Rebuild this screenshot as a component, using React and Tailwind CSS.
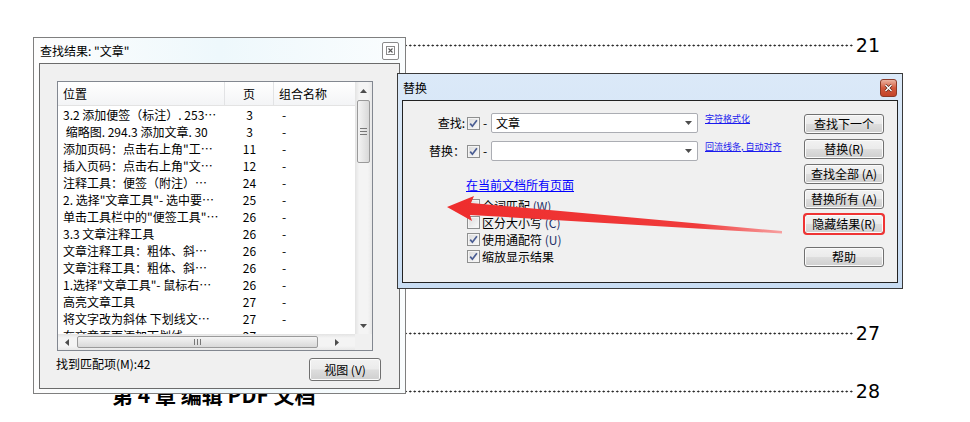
import React from "react";

const rows = [
  ["3.2 添加便签（标注）. 253…", "3"],
  ["\u00a0缩略图. 294.3 添加文章. 30", "3"],
  ["添加页码：点击右上角\"工…", "11"],
  ["插入页码：点击右上角\"文…", "12"],
  ["注释工具：便签（附注）…", "24"],
  ["2. 选择\"文章工具\"- 选中要…", "25"],
  ["单击工具栏中的\"便签工具\"…", "26"],
  ["3.3 文章注释工具", "26"],
  ["文章注释工具：粗体、斜…", "26"],
  ["文章注释工具：粗体、斜…", "26"],
  ["1.选择\"文章工具\"- 鼠标右…", "26"],
  ["高亮文章工具", "27"],
  ["将文字改为斜体 下划线文…", "27"],
  ["在文章页面添加下划线…", "27"],
];

function Check({ checked }) {
  return (
    <span className="flex h-[13px] w-[13px] shrink-0 items-center justify-center border border-[#8e8f8f] bg-gradient-to-br from-[#dadada] to-[#fbfbfb] shadow-[inset_0_0_0_1px_#f4f4f4]">
      {checked && (
        <svg width="9" height="9" viewBox="0 0 9 9">
          <path d="M1.2 4.6 L3.4 7.2 L7.9 1.2" stroke="#4a5d93" strokeWidth="1.7" fill="none" />
        </svg>
      )}
    </span>
  );
}

function Btn({ children, className = "" }) {
  return (
    <div
      className={
        "flex items-center justify-center rounded-[3px] border border-[#707070] bg-[linear-gradient(#f2f2f2_0%,#ebebeb_48%,#dddddd_52%,#cfcfcf_100%)] text-[12px] leading-[14px] text-black shadow-[inset_0_0_0_1px_#fbfbfb] " +
        className
      }
    >
      {children}
    </div>
  );
}

function TocLine({ top, num }) {
  return (
    <div className="absolute left-[120px] flex h-[20px] w-[760px] items-center" style={{ top }}>
      <div className="h-[3px] flex-1 bg-[radial-gradient(circle,#222_0.85px,transparent_1.15px)] bg-[length:4.5px_3px] bg-repeat-x" />
      <span className="ml-[3px] font-['DejaVu_Sans',sans-serif] text-[19px] leading-[20px] text-black">{num}</span>
    </div>
  );
}

function Tri({ dir }) {
  const d = {
    up: "M0 4 L3.5 0 L7 4 Z",
    down: "M0 0 L7 0 L3.5 4 Z",
    left: "M4 0 L4 7 L0 3.5 Z",
    right: "M0 0 L4 3.5 L0 7 Z",
  }[dir];
  const w = dir === "up" || dir === "down" ? 7 : 4;
  const h = dir === "up" || dir === "down" ? 4 : 7;
  return (
    <svg width={w} height={h} viewBox={`0 0 ${w} ${h}`}>
      <path d={d} fill="#4d4d4d" />
    </svg>
  );
}

function ResultsWindow() {
  return (
    <div className="absolute left-[33px] top-[37px] flex h-[357px] w-[373px] flex-col border border-[#7f7f7f] bg-gradient-to-r from-[#fdfdfd] via-[#eef8fc] to-[#fafdfe] px-[5px] pb-[4px]">
      <div className="flex h-[25px] items-center justify-between">
        <span className="pl-[1px] text-[12px] leading-[16px] text-black">查找结果: "文章"</span>
        <div className="mr-[1px] flex h-[18px] w-[17px] items-center justify-center rounded-[2px] border border-[#8a8a8a] bg-white">
          <svg width="9" height="9" viewBox="0 0 9 9">
            <rect x="0.5" y="0.5" width="8" height="8" fill="none" stroke="#8a8a8a" />
            <path d="M2.5 2.5 L6.5 6.5 M6.5 2.5 L2.5 6.5" stroke="#555" strokeWidth="1.1" />
          </svg>
        </div>
      </div>
      <div className="flex flex-1 flex-col border border-[#6b6b6b] bg-[#f0f0f0] px-[17px] pt-[17px]">
        <div className="flex h-[270px] w-[316px] flex-col border border-[#828790] bg-white">
          <div className="flex h-[252px]">
            <div className="w-[297px] overflow-hidden">
              <div className="flex h-[24px] items-stretch border-b border-[#e3e3e3] bg-gradient-to-b from-white to-[#f3f4f6] text-[12px] text-black">
                <div className="flex w-[167px] items-center border-r border-[#e2e3e5] pl-[5px]">位置</div>
                <div className="flex w-[49px] items-center justify-center border-r border-[#e2e3e5]">页</div>
                <div className="flex flex-1 items-center pl-[5px]">组合名称</div>
              </div>
              {rows.map(([t, p], i) => (
                <div key={i} className="flex h-[17px] items-center whitespace-nowrap text-[12px] leading-[17px] text-black">
                  <div className="w-[167px] overflow-hidden pl-[5px]">{t}</div>
                  <div className="w-[49px] text-center">{p}</div>
                  <div className="pl-[8px]">-</div>
                </div>
              ))}
            </div>
            <div className="flex w-[17px] flex-col items-center bg-[linear-gradient(to_right,#e3e3e3,#f4f4f4_25%,#f4f4f4_75%,#e8e8e8)]">
              <div className="flex h-[17px] items-center justify-center">
                <Tri dir="up" />
              </div>
              <div className="mt-px flex h-[63px] w-[13px] flex-col items-center justify-center gap-[2px] rounded-[2px] border border-[#9a9a9a] bg-gradient-to-r from-[#f4f4f4] to-[#d9d9d9]">
                <span className="h-px w-[7px] bg-[#777]" />
                <span className="h-px w-[7px] bg-[#777]" />
                <span className="h-px w-[7px] bg-[#777]" />
              </div>
              <div className="flex-1" />
              <div className="flex h-[17px] items-center justify-center">
                <Tri dir="down" />
              </div>
            </div>
          </div>
          <div className="flex h-[16px]">
            <div className="flex w-[297px] items-center bg-[linear-gradient(#e3e3e3,#f4f4f4_25%,#f4f4f4_75%,#e8e8e8)]">
              <div className="flex w-[17px] items-center justify-center">
                <Tri dir="left" />
              </div>
              <div className="ml-[2px] flex h-[12px] w-[241px] items-center justify-center gap-[2px] rounded-[2px] border border-[#9a9a9a] bg-gradient-to-b from-[#f4f4f4] to-[#d9d9d9]">
                <span className="h-[6px] w-px bg-[#777]" />
                <span className="h-[6px] w-px bg-[#777]" />
                <span className="h-[6px] w-px bg-[#777]" />
              </div>
              <div className="flex flex-1 items-center justify-center">
                <Tri dir="right" />
              </div>
            </div>
            <div className="flex-1 bg-[#f0f0f0]" />
          </div>
        </div>
        <div className="mt-[5px] flex items-start justify-between">
          <span className="ml-[-1px] text-[12px] leading-[16px] text-black">找到匹配项(M):42</span>
          <Btn className="mr-px mt-[2px] h-[23px] w-[72px]">视图 (V)</Btn>
        </div>
      </div>
    </div>
  );
}

function Combo({ value }) {
  return (
    <div className="ml-[3px] flex h-[20px] w-[207px] items-center justify-between rounded-[2px] border border-[#abadb3] bg-white pl-[4px] pr-[5px] text-[12px] text-black">
      <span>{value}</span>
      <Tri dir="down" />
    </div>
  );
}

function ReplaceWindow() {
  return (
    <div className="absolute left-[397px] top-[73px] flex h-[216px] w-[506px] flex-col border border-[#3a3a3a] bg-gradient-to-b from-[#dbe9f8] to-[#c9ddf3] px-[4px] pb-[5px]">
      <div className="flex h-[26px] items-start justify-between">
        <span className="pl-[1px] pt-[6px] text-[12px] leading-[16px] text-black">替换</span>
        <div className="mr-px mt-[5px] flex h-[18px] w-[17px] items-center justify-center rounded-[3px] border border-[#8b3a28] bg-gradient-to-b from-[#eab3a2] via-[#d2583c] to-[#c4452a]">
          <svg width="9" height="8" viewBox="0 0 9 8">
            <path d="M1.5 1 L7.5 7 M7.5 1 L1.5 7" stroke="#4a1a10" strokeWidth="2.6" />
            <path d="M1.5 1 L7.5 7 M7.5 1 L1.5 7" stroke="#fff" strokeWidth="1.5" />
          </svg>
        </div>
      </div>
      <div className="flex flex-1 border border-[#222] bg-[#f0f0f0]">
        <div className="flex-1 pt-[12px] text-[12px] text-black">
          <div className="flex h-[20px] items-center">
            <span className="w-[62px] text-right leading-[16px]">查找:</span>
            <span className="ml-[2px]"><Check checked /></span>
            <span className="ml-[3px] w-[5px]">-</span>
            <Combo value="文章" />
            <span className="ml-[7px] self-start pt-[1px] text-[9px] leading-[10px] text-[#1a1aee] underline">字符格式化</span>
          </div>
          <div className="mt-[8px] flex h-[20px] items-center">
            <span className="w-[62px] text-right leading-[16px]">替换：</span>
            <span className="ml-[2px]"><Check checked /></span>
            <span className="ml-[3px] w-[5px]">-</span>
            <Combo value="" />
            <span className="ml-[7px] self-start pt-[1px] text-[9px] leading-[10px] text-[#1a1aee] underline">回流线条, 自动对齐</span>
          </div>
          <div className="mt-[16px] pl-[63px] leading-[16px] text-[#0000ff] underline">在当前文档所有页面</div>
          <div className="mt-[4px] flex flex-col pl-[64px]">
            {[
              ["全词匹配 ", "(W)", false],
              ["区分大小写 ", "(C)", false],
              ["使用通配符 ", "(U)", true],
              ["缩放显示结果", "", true],
            ].map(([a, b, c], i) => (
              <div key={i} className="flex h-[17px] items-center gap-[2px]">
                <Check checked={c} />
                <span className="leading-[16px]">
                  {a}
                  <span className="text-[#1c2f66]">{b}</span>
                </span>
              </div>
            ))}
          </div>
        </div>
        <div className="mr-[13px] flex w-[80px] flex-col gap-[5px] pt-[13px]">
          <Btn className="h-[20px]">查找下一个</Btn>
          <Btn className="h-[20px]">替换(R)</Btn>
          <Btn className="h-[20px]">查找全部 (A)</Btn>
          <Btn className="h-[20px]">替换所有 (A)</Btn>
          <Btn className="h-[20px] outline-2 -outline-offset-1 outline-[#ef3434]">隐藏结果(R)</Btn>
          <Btn className="mt-[8px] h-[20px]">帮助</Btn>
        </div>
      </div>
    </div>
  );
}

export default function App() {
  return (
    <div className="relative h-[422px] w-[970px] overflow-hidden bg-white font-['Noto_Sans_CJK_SC',sans-serif]">
      <TocLine top={35} num="21" />
      <TocLine top={323} num="27" />
      <TocLine top={381} num="28" />
      <div className="absolute left-[112px] top-[381px] text-[21px] font-bold leading-[26px] text-black">第 4 章 编辑 PDF 文档</div>
      <ResultsWindow />
      <ReplaceWindow />
      <svg className="pointer-events-none absolute left-0 top-0" width="970" height="422" viewBox="0 0 970 422">
        <defs>
          <linearGradient id="ar" x1="447" y1="0" x2="782" y2="0" gradientUnits="userSpaceOnUse">
            <stop offset="0" stopColor="#ee2d2d" />
            <stop offset="0.75" stopColor="#f03b3b" />
            <stop offset="1" stopColor="#f7a0a0" />
          </linearGradient>
        </defs>
        <polygon points="447,207 474,196 471,203 782,231 782,233.5 470,215 472,221" fill="url(#ar)" />
      </svg>
    </div>
  );
}
